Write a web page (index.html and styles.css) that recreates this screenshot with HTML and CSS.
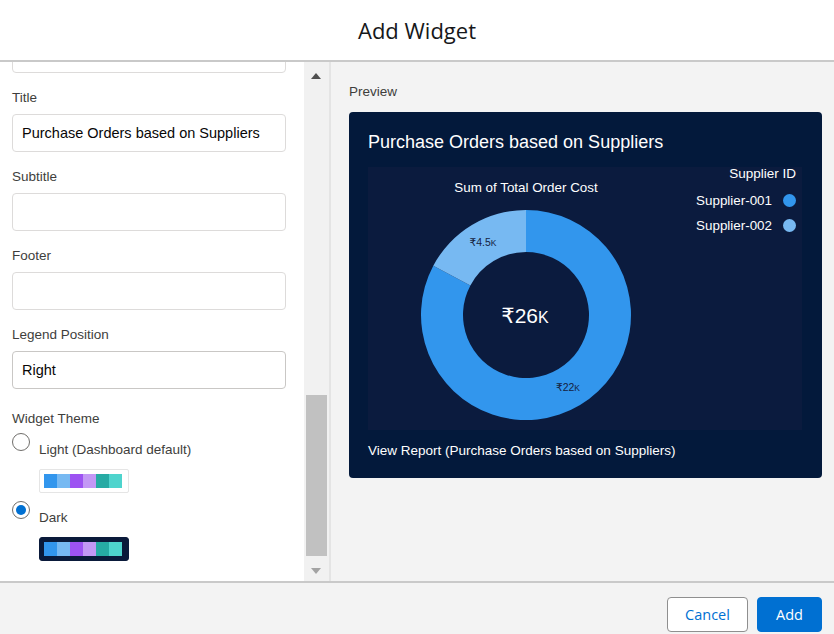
FILE: index.html
```html
<!DOCTYPE html>
<html lang="en">
<head>
<meta charset="utf-8">
<title>Add Widget</title>
<link rel="stylesheet" href="styles.css">
</head>
<body>
<div class="modal">
  <header class="modal-header">
    <h1 class="modal-title">Add Widget</h1>
  </header>
  <div class="modal-body">
    <div class="form-pane">
      <div class="form-content">
        <div class="field field-cut">
          <div class="input"></div>
        </div>
        <div class="field">
          <div class="label">Title</div>
          <div class="input">Purchase Orders based on Suppliers</div>
        </div>
        <div class="field">
          <div class="label">Subtitle</div>
          <div class="input"></div>
        </div>
        <div class="field">
          <div class="label">Footer</div>
          <div class="input"></div>
        </div>
        <div class="field">
          <div class="label">Legend Position</div>
          <div class="input input-select">Right</div>
        </div>
        <div class="field field-theme">
          <div class="label">Widget Theme</div>
          <div class="theme-option">
            <span class="radio"></span>
            <div class="theme-body">
              <div class="theme-name">Light (Dashboard default)</div>
              <div class="swatch swatch-light">
                <span class="cell c1"></span><span class="cell c2"></span><span class="cell c3"></span><span class="cell c4"></span><span class="cell c5"></span><span class="cell c6"></span>
              </div>
            </div>
          </div>
          <div class="theme-option">
            <span class="radio radio-checked"></span>
            <div class="theme-body">
              <div class="theme-name">Dark</div>
              <div class="swatch swatch-dark">
                <span class="cell c1"></span><span class="cell c2"></span><span class="cell c3"></span><span class="cell c4"></span><span class="cell c5"></span><span class="cell c6"></span>
              </div>
            </div>
          </div>
        </div>
      </div>
    </div>
    <div class="scrollbar">
      <div class="sb-button"><span class="tri tri-up"></span></div>
      <div class="sb-track"><div class="sb-thumb"></div></div>
      <div class="sb-button"><span class="tri tri-down"></span></div>
    </div>
    <div class="preview-pane">
      <div class="preview-label">Preview</div>
      <div class="card">
        <div class="card-title">Purchase Orders based on Suppliers</div>
        <div class="chart">
          <div class="chart-main">
            <div class="chart-title">Sum of Total Order Cost</div>
            <svg class="donut" width="316" height="222" viewBox="0 0 316 222">
              <path d="M158 6 A105 105 0 1 1 65.29 61.70 L102.38 81.42 A63 63 0 1 0 158 48 Z" fill="#3296ed"/>
              <path d="M65.29 61.70 A105 105 0 0 1 158 6 L158 48 A63 63 0 0 0 102.38 81.42 Z" fill="#77b9f2"/>
              <text x="115" y="42" class="slice-label" text-anchor="middle">₹4.5<tspan class="k-small">K</tspan></text>
              <text x="200" y="187" class="slice-label" text-anchor="middle">₹22<tspan class="k-small">K</tspan></text>
              <text x="157" y="119" class="total-label" text-anchor="middle">₹26<tspan class="k-big">K</tspan></text>
            </svg>
          </div>
          <div class="legend">
            <div class="legend-title">Supplier ID</div>
            <div class="legend-item"><span>Supplier-001</span><span class="dot dot1"></span></div>
            <div class="legend-item"><span>Supplier-002</span><span class="dot dot2"></span></div>
          </div>
        </div>
        <div class="card-footer">View Report (Purchase Orders based on Suppliers)</div>
      </div>
    </div>
  </div>
  <footer class="modal-footer">
    <button class="btn btn-neutral">Cancel</button>
    <button class="btn btn-brand">Add</button>
  </footer>
</div>
</body>
</html>
```
FILE: styles.css
```css
* { box-sizing: border-box; }

html, body {
  margin: 0;
  padding: 0;
  height: 100%;
}

body {
  background: #ffffff;
  font-family: "Liberation Sans", Arial, sans-serif;
  color: #080707;
  overflow: hidden;
}

.modal {
  display: flex;
  flex-direction: column;
  height: 634px;
  width: 834px;
}

.modal-header {
  height: 62px;
  flex: none;
  background: #ffffff;
  border-bottom: 2px solid #c9c9c9;
  display: flex;
  align-items: center;
  justify-content: center;
}

.modal-title {
  margin: 0;
  font-family: "Open Sans", "Noto Sans", sans-serif;
  font-weight: 400;
  font-size: 22px;
  color: #16181a;
}

.modal-body {
  flex: 1;
  display: flex;
  min-height: 0;
}

/* ---------- form pane ---------- */
.form-pane {
  width: 304px;
  flex: none;
  background: #ffffff;
  overflow: hidden;
}

.form-content {
  margin-top: -27px;
  padding: 0 18px 0 12px;
}

.field { margin-top: 16px; }
.field-cut { margin-top: 0; }

.label {
  font-size: 13.5px;
  line-height: 18px;
  color: #3e3e3c;
  margin-bottom: 7px;
}

.input {
  height: 38px;
  border: 1px solid #dddbda;
  border-radius: 4px;
  background: #fff;
  padding: 0 9px;
  display: flex;
  align-items: center;
  font-size: 14.5px;
  color: #080707;
}

.input-select { border-color: #c9c7c5; }

.field-theme { margin-top: 21px; }
.field-theme .label { margin-bottom: 5px; }

.theme-option {
  display: flex;
  gap: 9px;
  margin-bottom: 8px;
}

.radio {
  width: 18px;
  height: 18px;
  flex: none;
  border: 1px solid #706e6b;
  border-radius: 50%;
  background: #fff;
  display: flex;
  align-items: center;
  justify-content: center;
}

.radio-checked::after {
  content: "";
  width: 10px;
  height: 10px;
  border-radius: 50%;
  background: #0070d2;
}

.theme-body { padding-top: 8px; }

.theme-name {
  font-size: 13.5px;
  line-height: 18px;
  color: #3e3e3c;
}

.swatch {
  margin-top: 10px;
  width: 90px;
  height: 24px;
  padding: 4px 6px 4px 4px;
  display: flex;
  border-radius: 2px;
}

.swatch-light {
  background: #fff;
  border: 1px solid #e5e5e5;
}

.swatch-dark {
  background: #0a1a3a;
  border: 1px solid #0a1a3a;
  border-radius: 3px;
}

.cell { flex: 1; height: 14px; }
.c1 { background: #3296ed; }
.c2 { background: #77b9f2; }
.c3 { background: #9d53f2; }
.c4 { background: #c398f5; }
.c5 { background: #26aba4; }
.c6 { background: #4ed4cd; }

/* ---------- scrollbar ---------- */
.scrollbar {
  width: 27px;
  flex: none;
  background: #f1f1f1;
  display: flex;
  flex-direction: column;
  border-right: 2px solid #e4e4e4;
}

.sb-button {
  height: 17px;
  flex: none;
  display: flex;
  align-items: center;
  justify-content: center;
  padding-right: 1px;
}

.tri { width: 0; height: 0; }
.tri-up {
  border-left: 5.5px solid transparent;
  border-right: 5.5px solid transparent;
  border-bottom: 6px solid #505050;
  margin-top: 10px;
}
.tri-down {
  border-left: 5.5px solid transparent;
  border-right: 5.5px solid transparent;
  border-top: 6px solid #a3a3a3;
  margin-bottom: 4px;
}

.sb-track {
  flex: 1;
  display: flex;
  flex-direction: column;
  justify-content: flex-end;
  padding: 0 2px 8px 2px;
}

.sb-thumb {
  height: 161px;
  background: #c1c1c1;
}

/* ---------- preview pane ---------- */
.preview-pane {
  flex: 1;
  background: #f3f3f3;
  padding: 22px 12px 0 18px;
}

.preview-label {
  font-size: 13.5px;
  line-height: 16px;
  color: #3e3e3c;
  margin-bottom: 12px;
}

.card {
  background: #03193b;
  border-radius: 4px;
  padding: 20px 20px 19px 19px;
  height: 366px;
  color: #ffffff;
}

.card-title {
  font-size: 18px;
  line-height: 20px;
  color: #ffffff;
}

.chart {
  margin-top: 15px;
  height: 263px;
  background: #0b1b3e;
  display: flex;
}

.chart-main {
  width: 316px;
  flex: none;
  display: flex;
  flex-direction: column;
  align-items: center;
}

.chart-title {
  margin-top: 13px;
  font-size: 13.4px;
  line-height: 16px;
  color: #ffffff;
}

.donut {
  display: block;
  margin-top: 8px;
}

.slice-label {
  font-family: "Liberation Sans", "DejaVu Sans", sans-serif;
  font-size: 10.5px;
  fill: #15223f;
}

.k-small { font-size: 8.5px; }

.total-label {
  font-family: "Liberation Sans", "DejaVu Sans", sans-serif;
  font-size: 21px;
  fill: #ffffff;
}

.k-big { font-size: 16px; }

.legend {
  flex: 1;
  padding-right: 6px;
  display: flex;
  flex-direction: column;
  align-items: flex-end;
}

.legend-title {
  font-size: 13.5px;
  line-height: 14px;
}

.legend-item {
  display: flex;
  align-items: center;
  gap: 11px;
  font-size: 13.4px;
  height: 25px;
}

.legend-title + .legend-item { margin-top: 7px; }

.dot {
  width: 13px;
  height: 13px;
  border-radius: 50%;
}
.dot1 { background: #3296ed; }
.dot2 { background: #77b9f2; }

.card-footer {
  margin-top: 13px;
  font-size: 13.5px;
  line-height: 16px;
  color: #ffffff;
}

/* ---------- footer ---------- */
.modal-footer {
  height: 53px;
  flex: none;
  background: #f3f3f3;
  border-top: 2px solid #c9c9c9;
  display: flex;
  justify-content: flex-end;
  align-items: flex-start;
  gap: 9px;
  padding: 14px 12px 0 0;
}

.btn {
  height: 35px;
  border-radius: 4px;
  font-family: "Open Sans", "Noto Sans", sans-serif;
  font-size: 14.5px;
  padding: 0;
  cursor: pointer;
}

.btn-neutral {
  width: 81px;
  background: #ffffff;
  border: 1px solid #8f8f8f;
  color: #0070d2;
}

.btn-brand {
  width: 65px;
  background: #0070d2;
  border: 1px solid #0070d2;
  color: #ffffff;
}
```
